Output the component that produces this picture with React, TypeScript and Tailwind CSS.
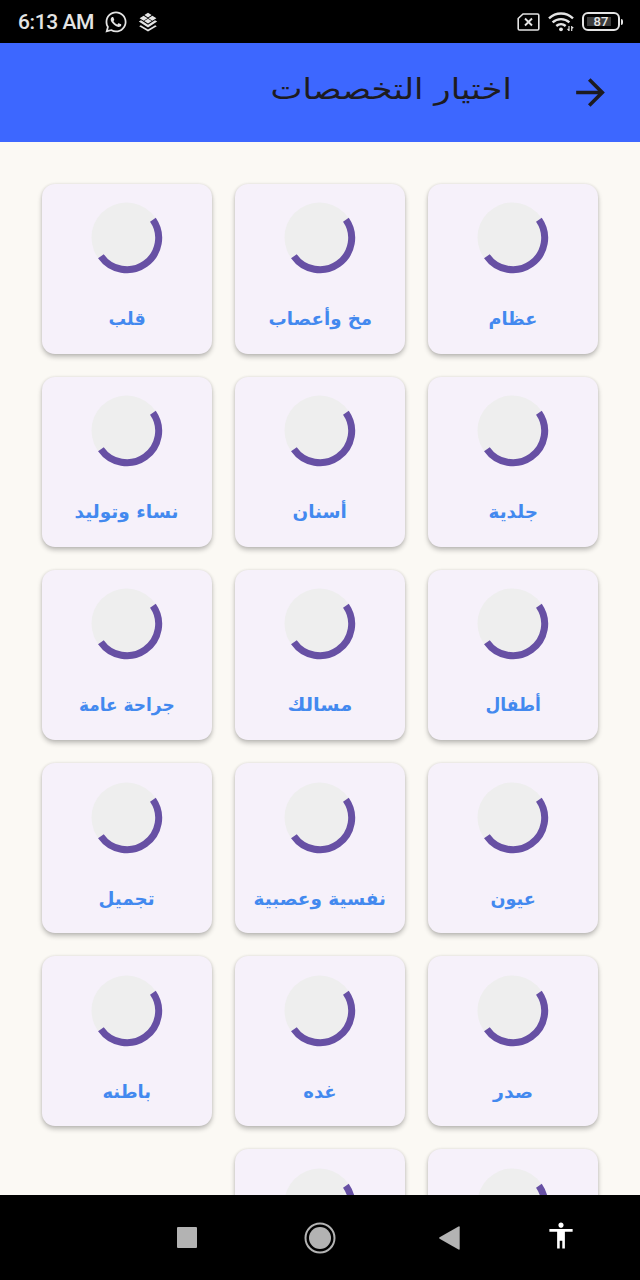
import React, { useLayoutEffect, useRef, useState } from 'react';
import { FaWhatsapp } from 'react-icons/fa';
import { MdArrowForward, MdAccessibility } from 'react-icons/md';

interface Specialty {
  name: string;
  width: number;
}

const specialties: Specialty[] = [
  { name: 'عظام', width: 49 },
  { name: 'مخ وأعصاب', width: 104 },
  { name: 'قلب', width: 37 },
  { name: 'جلدية', width: 49 },
  { name: 'أسنان', width: 54 },
  { name: 'نساء وتوليد', width: 104 },
  { name: 'أطفال', width: 55 },
  { name: 'مسالك', width: 65 },
  { name: 'جراحة عامة', width: 96 },
  { name: 'عيون', width: 45 },
  { name: 'نفسية وعصبية', width: 132 },
  { name: 'تجميل', width: 56 },
  { name: 'صدر', width: 40 },
  { name: 'غده', width: 33 },
  { name: 'باطنه', width: 49 },
  { name: '', width: 0 },
  { name: '', width: 0 },
];

// Stretches a line of text horizontally so it takes the given width
function FitText({ text, width, className }: { text: string; width: number; className: string }) {
  const ref = useRef<HTMLSpanElement>(null);
  const [scale, setScale] = useState(1);

  useLayoutEffect(() => {
    if (ref.current && ref.current.offsetWidth > 0) {
      setScale(width / ref.current.offsetWidth);
    }
  }, [text, width]);

  return (
    <span
      ref={ref}
      className={`inline-block whitespace-nowrap ${className}`}
      style={{ transform: `scaleX(${scale})` }}
    >
      {text}
    </span>
  );
}

function Spinner() {
  return (
    <svg className="w-[72px] h-[72px] shrink-0" viewBox="0 0 72 72" fill="none">
      <circle cx="35.5" cy="35.5" r="35" fill="#eeeeee" />
      <path d="M61.9 17.7A31.7 31.7 0 0 1 9.9 54.2" stroke="#6750a4" strokeWidth="7" />
    </svg>
  );
}

function StatusBar() {
  return (
    <div className="h-[43px] shrink-0 bg-black flex items-center justify-between pl-[18px] pr-[17px] text-[#e4e4e4]">
      <div className="flex items-center">
        <span className="w-[76px] whitespace-nowrap font-[Roboto] font-medium text-[21px] leading-6 tracking-[-0.4px]">6:13 AM</span>
        <FaWhatsapp className="w-[24px] h-[24px] ml-[10px]" />
        <svg className="w-5 h-5 ml-[10px]" viewBox="0 0 20 20" fill="currentColor">
          <path d="M10 .8l3.6 2.3L10 5.400 6.400 3.100zM5.600 3.800l4 2.500-4 2.500-4-2.500zM14.400 3.800l4 2.500-4 2.500-4-2.500zM10 6.700l3.800 2.400L10 11.500 6.200 9.100z" />
          <path d="M.8 9.600l2.200-1.300 7 4.400 7-4.400 2.200 1.300-9.200 5.900z" />
          <path d="M2.800 13.200L10 17.600l7.200-4.400 1.600 1L10 19.500l-8.800-5.300z" />
        </svg>
      </div>
      <div className="flex items-center">
        <svg className="w-[23px] h-[18px]" viewBox="0 0 23 18" fill="none" stroke="currentColor" strokeWidth="1.6">
          <path d="M6 1h14.500a1.300 1.300 0 0 1 1.300 1.300v13.400a1.300 1.300 0 0 1-1.300 1.300h-18A1.300 1.300 0 0 1 1.200 15.700V5.500z" />
          <path d="M8 5.500l7 7M15 5.500l-7 7" strokeWidth="1.900" />
        </svg>
        <svg className="w-[26px] h-5 ml-[8px] mr-px" viewBox="0 0 26 20" fill="none" stroke="currentColor" strokeWidth="2.4">
          <path d="M1 6.300C8-.1 18-.1 25 6.300" />
          <path d="M4.600 10.300c4.700-4.300 12.100-4.300 16.800 0" />
          <path d="M8.300 14c2.700-2.300 6.700-2.300 9.400 0" />
          <circle cx="13" cy="17.300" r="1.900" fill="currentColor" stroke="none" />
          <path d="M21 14v5M23.700 14v5M19.500 16.800l1.500 1.700M25.200 16.200l-1.500-1.700" strokeWidth="1.200" />
        </svg>
        <div className="ml-[7px] w-[38px] h-[19px] rounded-[6px] border-2 border-[#e4e4e4] p-[3px] flex">
          <div className="flex-1 bg-gradient-to-r from-[#3c3c3c] from-85% to-black to-85% flex items-center justify-center font-[Roboto] font-medium text-[13px] leading-none">
            87
          </div>
        </div>
        <div className="w-[2px] h-[6px] ml-px rounded-r bg-[#e4e4e4]" />
      </div>
    </div>
  );
}

function SpecialtyCard({ name, width }: Specialty) {
  return (
    <div className="h-[170px] rounded-[13px] bg-[#f6f1fa] shadow-[0_3px_5px_rgba(0,0,0,0.24),0_0_3px_rgba(0,0,0,0.1)] flex flex-col items-center pt-[18.500px]">
      <Spinner />
      {name && (
        <div className="mt-[31px] h-7 flex items-center justify-center">
          <FitText
            text={name}
            width={width}
            className="font-['DejaVu_Sans',sans-serif] font-bold text-[18px] leading-7 text-[#4389ef]"
          />
        </div>
      )}
    </div>
  );
}

function NavigationBar() {
  return (
    <div dir="ltr" className="h-[85px] shrink-0 bg-black flex items-center pl-[177px]">
      <div className="w-5 h-[21px] rounded-[1px] bg-[#b3b3b3]" />
      <svg className="w-8 h-8 ml-[106.500px]" viewBox="0 0 32 32" fill="none">
        <circle cx="16" cy="16" r="14.500" stroke="#b3b3b3" strokeWidth="2" />
        <circle cx="16" cy="16" r="11" fill="#b3b3b3" />
      </svg>
      <svg className="w-[21px] h-6 ml-[103.500px]" viewBox="0 0 21 24" fill="#b3b3b3">
        <path d="M.6 11.300L19.500.5q1.200-.5 1.200.8v21.400q0 1.300-1.200.8L.6 12.700q-1-.7 0-1.400z" />
      </svg>
      <MdAccessibility className="w-[32px] h-[31px] ml-[85px] -mt-1 text-white" />
    </div>
  );
}

export default function App() {
  return (
    <div className="w-[640px] h-[1280px] overflow-hidden bg-[#fbf9f4] flex flex-col">
      <StatusBar />
      <header dir="rtl" className="h-[99px] shrink-0 bg-[#3d67ff] flex items-start pr-[28.500px]">
        <MdArrowForward className="w-[43px] h-[43px] mt-[28px] text-[#1d1b20]" />
        <h1 className="mt-[26px] mr-[57.500px] w-[239px] h-10 flex justify-center">
          <FitText
            text="اختيار التخصصات"
            width={241}
            className="font-['DejaVu_Sans',sans-serif] text-[29px] leading-10 text-[#1d1b20]"
          />
        </h1>
      </header>
      <main dir="rtl" className="flex-1 min-h-0 overflow-hidden px-[41.700px] pt-[41.500px]">
        <div className="grid grid-cols-3 gap-[23.200px]">
          {specialties.map((item, index) => (
            <SpecialtyCard key={index} name={item.name} width={item.width} />
          ))}
        </div>
      </main>
      <NavigationBar />
    </div>
  );
}
